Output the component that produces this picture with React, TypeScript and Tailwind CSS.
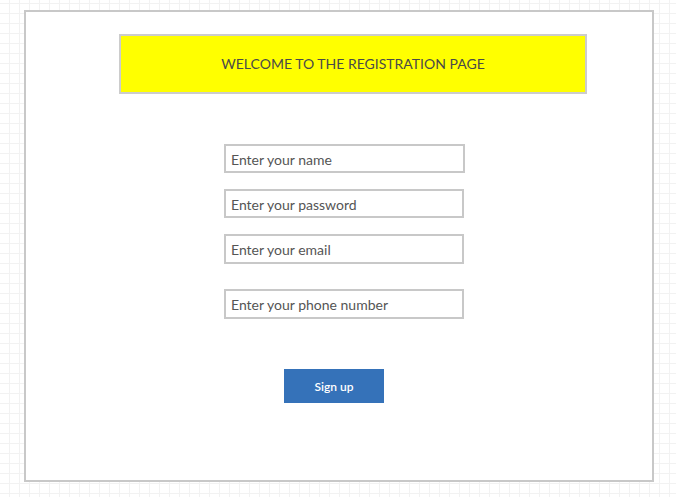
import React from "react";

export default function App() {
  const inputCls =
    "block ml-[198px] border-2 border-[#c8c8c8] bg-white pl-[5px] pt-[1px] text-[14px] text-[#555] placeholder:text-[#555] outline-none font-['Lato',sans-serif]";
  return (
    <div className="w-[676px] h-[497px] bg-white bg-[linear-gradient(to_right,#f2f2f2_1px,transparent_1px),linear-gradient(to_bottom,#f2f2f2_1px,transparent_1px)] bg-[size:10px_10px] bg-[position:9px_3px] pt-[10px] pl-[24px] font-['Lato',sans-serif]">
      <div className="w-[630px] h-[472px] border-2 border-[#c8c8c8] bg-white flex flex-col">
        <div className="ml-[93px] mt-[22px] w-[468px] h-[60px] border-2 border-[#cccccc] bg-[#ffff00] flex items-center justify-center pb-[2px] text-[14px] text-[#4a4a4a]">
          WELCOME TO THE REGISTRATION PAGE
        </div>
        <input className={inputCls + " mt-[50px] w-[241px] h-[29px]"} placeholder="Enter your name" />
        <input className={inputCls + " mt-[16px] w-[240px] h-[29px]"} type="text" placeholder="Enter your password" />
        <input className={inputCls + " mt-[16px] w-[240px] h-[30px]"} placeholder="Enter your email" />
        <input className={inputCls + " mt-[25px] w-[240px] h-[30px]"} placeholder="Enter your phone number" />
        <button className="ml-[258px] mt-[50px] w-[100px] h-[34px] bg-[#3572b9] text-white text-[12px] font-semibold flex items-center justify-center pt-[1px]">
          Sign up
        </button>
      </div>
    </div>
  );
}
